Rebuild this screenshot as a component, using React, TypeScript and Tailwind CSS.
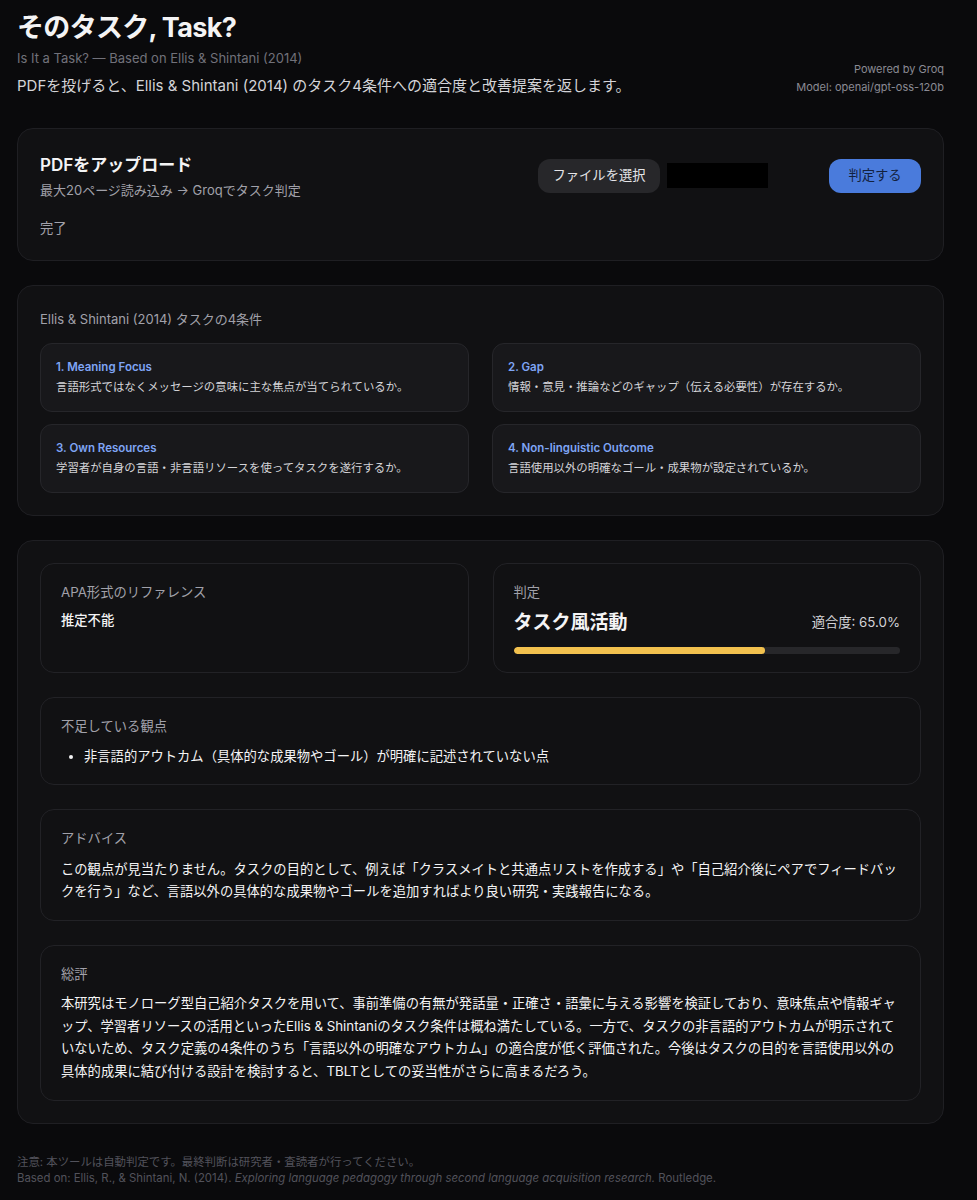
const criteria = [
  {
    title: "1. Meaning Focus",
    desc: "言語形式ではなくメッセージの意味に主な焦点が当てられているか。",
  },
  {
    title: "2. Gap",
    desc: "情報・意見・推論などのギャップ（伝える必要性）が存在するか。",
  },
  {
    title: "3. Own Resources",
    desc: "学習者が自身の言語・非言語リソースを使ってタスクを遂行するか。",
  },
  {
    title: "4. Non-linguistic Outcome",
    desc: "言語使用以外の明確なゴール・成果物が設定されているか。",
  },
];

const score = 65;

const Card = ({ children, className = "" }: { children: React.ReactNode; className?: string }) => (
  <section className={`rounded-[16px] border border-[#1f1f23] bg-[#111113] p-[22px] ${className}`}>
    {children}
  </section>
);

const Panel = ({ label, children }: { label: string; children: React.ReactNode }) => (
  <div className="rounded-[14px] border border-[#222226] bg-[#111113] px-5 pt-[18px] pb-[18px]">
    <div className="text-[13.3px] leading-[20px] text-[#a1a1aa]">{label}</div>
    {children}
  </div>
);

export default function App() {
  return (
    <div
      className="min-h-screen bg-[#0a0a0c] pl-[17px] pr-[33px] pt-[10px] pb-6 text-[#e4e4e7]"
      style={{ fontFamily: 'Inter, "Noto Sans CJK JP", sans-serif' }}
    >
      {/* Header */}
      <header className="flex items-end justify-between">
        <div>
          <h1 className="text-[27px] font-bold leading-[36px] tracking-tight text-[#f4f4f5]">
            そのタスク, Task?
          </h1>
          <p className="mt-[2px] text-[13px] leading-[20px] text-[#71717a]">
            Is It a Task? — Based on Ellis &amp; Shintani (2014)
          </p>
          <p className="mt-[7px] text-[15px] leading-[22px] text-[#d4d4d8]">
            PDFを投げると、Ellis &amp; Shintani (2014) のタスク4条件への適合度と改善提案を返します。
          </p>
        </div>
        <div className="pb-[1px] text-right text-[11px] leading-[18px] text-[#8b8b94]">
          <div>Powered by Groq</div>
          <div>Model: openai/gpt-oss-120b</div>
        </div>
      </header>

      <main className="mt-[31px] flex flex-col gap-6">
        {/* Upload */}
        <Card>
          <div className="flex items-center justify-between">
            <div>
              <h2 className="mt-[2px] text-[17px] font-semibold leading-[24px] text-[#f4f4f5]">PDFをアップロード</h2>
              <p className="mt-[3px] text-[13px] leading-[20px] text-[#a1a1aa]">
                最大20ページ読み込み → Groqでタスク判定
              </p>
            </div>
            <div className="flex items-center">
              <button className="h-[34px] w-[122px] rounded-[12px] bg-[#27272a] text-[13.3px] text-[#e4e4e7]">
                ファイルを選択
              </button>
              <div className="ml-[7px] h-[25px] w-[101px] bg-black" />
              <button className="ml-[61px] h-[34px] w-[92px] rounded-[12px] bg-[#4a7bdc] text-[13.3px] text-[#13213d]">
                判定する
              </button>
            </div>
          </div>
          <p className="mt-[18px] text-[13.3px] leading-[20px] text-[#a1a1aa]">完了</p>
        </Card>

        {/* Criteria */}
        <Card>
          <h3 className="mt-[1px] text-[13px] leading-[20px] text-[#a1a1aa]">Ellis &amp; Shintani (2014) タスクの4条件</h3>
          <div className="mt-[14px] grid grid-cols-2 gap-x-[23px] gap-y-3">
            {criteria.map((c) => (
              <div key={c.title} className="rounded-[12px] border border-[#26262a] bg-[#18181b] p-[15px]">
                <div className="text-[11.5px] font-semibold leading-[17px] text-[#7fa5f5]">{c.title}</div>
                <div className="mt-[3px] text-[11.4px] leading-[17px] text-[#d4d4d8]">{c.desc}</div>
              </div>
            ))}
          </div>
        </Card>

        {/* Result */}
        <Card className="flex flex-col gap-6">
          <div className="grid grid-cols-2 gap-6">
            <Panel label="APA形式のリファレンス">
              <div className="mt-[8px] text-[13.3px] font-medium leading-[20px] text-[#f4f4f5]">推定不能</div>
            </Panel>
            <Panel label="判定">
              <div className="mt-[7px] flex items-center justify-between">
                <div className="text-[19px] font-bold leading-[28px] text-[#f4f4f5]">タスク風活動</div>
                <div className="text-[13.3px] text-[#d4d4d8]">適合度: 65.0%</div>
              </div>
              <div className="mt-[10px] h-[7px] w-full overflow-hidden rounded-full bg-[#27272a]">
                <div className="h-full rounded-full bg-[#f2c14e]" style={{ width: `${score}%` }} />
              </div>
            </Panel>
          </div>

          <Panel label="不足している観点">
            <ul className="mt-[10px] list-disc pl-[23px] text-[13.3px] leading-[20px] text-[#f4f4f5]">
              <li>非言語的アウトカム（具体的な成果物やゴール）が明確に記述されていない点</li>
            </ul>
          </Panel>

          <Panel label="アドバイス">
            <p className="mt-[10px] text-[13.3px] leading-[22px] text-[#f4f4f5]">
              この観点が見当たりません。タスクの目的として、例えば「クラスメイトと共通点リストを作成する」や「自己紹介後にペアでフィードバックを行う」など、言語以外の具体的な成果物やゴールを追加すればより良い研究・実践報告になる。
            </p>
          </Panel>

          <Panel label="総評">
            <p className="mt-[8px] text-[13.3px] leading-[22.5px] text-[#f4f4f5]">
              本研究はモノローグ型自己紹介タスクを用いて、事前準備の有無が発話量・正確さ・語彙に与える影響を検証しており、意味焦点や情報ギャップ、学習者リソースの活用といったEllis &amp; Shintaniのタスク条件は概ね満たしている。一方で、タスクの非言語的アウトカムが明示されていないため、タスク定義の4条件のうち「言語以外の明確なアウトカム」の適合度が低く評価された。今後はタスクの目的を言語使用以外の具体的成果に結び付ける設計を検討すると、TBLTとしての妥当性がさらに高まるだろう。
            </p>
          </Panel>
        </Card>
      </main>

      <footer className="mt-[30px] text-[11.4px] leading-[16px] text-[#52525b]">
        <p>注意: 本ツールは自動判定です。最終判断は研究者・査読者が行ってください。</p>
        <p>
          Based on: Ellis, R., &amp; Shintani, N. (2014).{" "}
          <em>Exploring language pedagogy through second language acquisition research.</em> Routledge.
        </p>
      </footer>
    </div>
  );
}
